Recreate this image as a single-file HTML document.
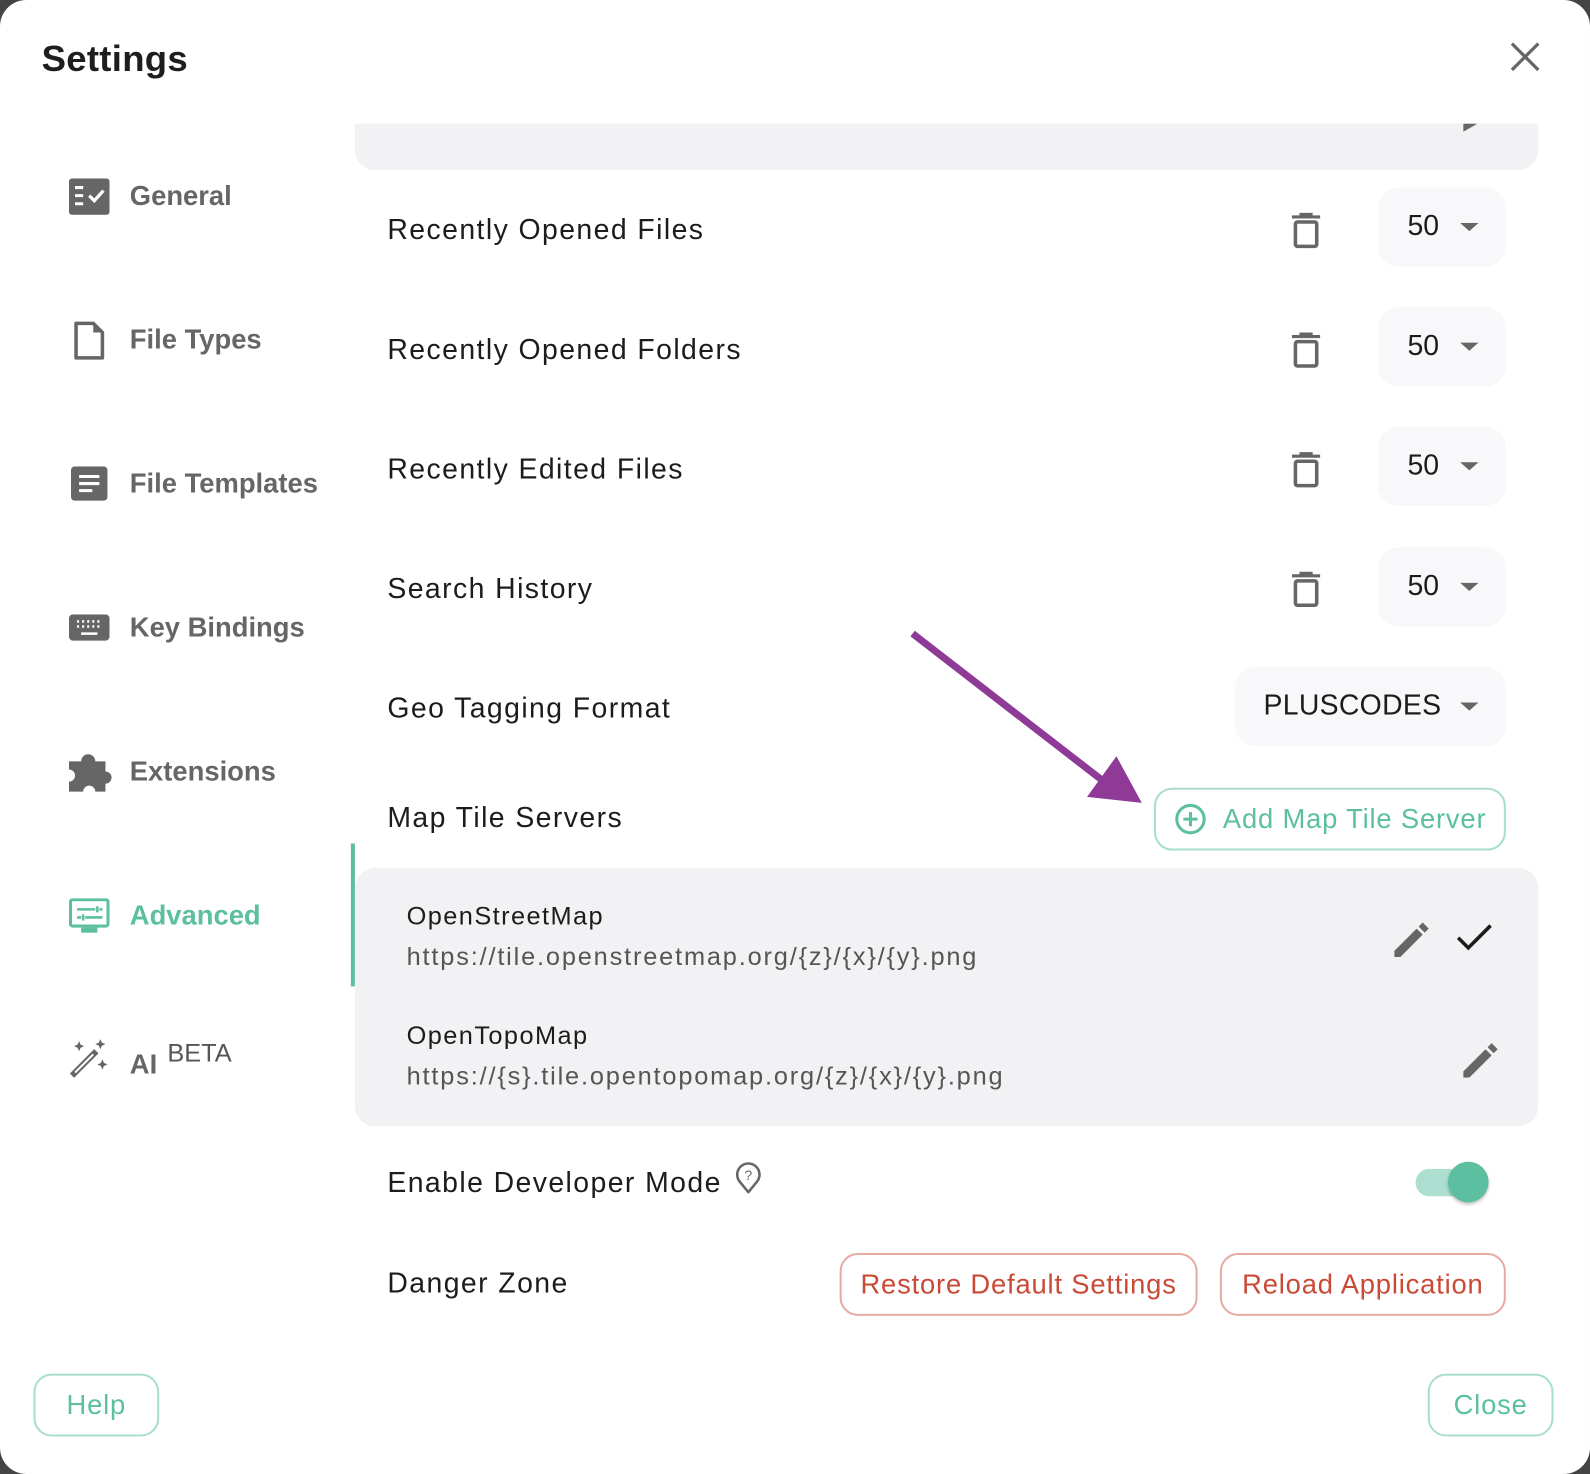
<!DOCTYPE html>
<html><head><meta charset="utf-8"><style>
html,body{margin:0;padding:0;width:1590px;height:1474px;overflow:hidden;background:#444;}
#s{position:absolute;left:0;top:0;width:1568px;height:1454px;transform:scale(1.01403,1.01376);transform-origin:0 0;}
#w{position:absolute;left:0;top:0;width:1568px;height:1454px;background:#fff;border-radius:26px;}
.a{position:absolute;font-family:"Liberation Sans",sans-serif;white-space:nowrap;line-height:1;}
.nav{font-size:27px;font-weight:bold;color:#666;}
.row{font-size:28px;color:#1c1c1c;letter-spacing:1.4px;}
.sel{position:absolute;background:#f8f7fa;border-radius:20px;}
.caret{position:absolute;width:0;height:0;border-left:9px solid transparent;border-right:9px solid transparent;border-top:8px solid #666;}
.btn{position:absolute;border-radius:18px;box-sizing:border-box;font-family:"Liberation Sans",sans-serif;display:flex;align-items:center;justify-content:center;font-size:27px;letter-spacing:0.8px;}
</style></head><body><div id="s"><div id="w">
<div class="a" style="left:41px;top:40px;font-size:36px;font-weight:bold;color:#1e1e1e;letter-spacing:0.3px">Settings</div>
<svg class="a" style="left:1489px;top:41px" width="30" height="30" viewBox="0 0 30 30"><path d="M2 2L28 28M28 2L2 28" stroke="#666" stroke-width="3.2"/></svg>

<svg class="a" style="left:68px;top:176px" width="40" height="36" viewBox="0 0 40 36"><rect width="40" height="36" rx="3" fill="#666"/><path d="M6 9h8M6 17h8M6 25h8" stroke="#fff" stroke-width="3"/><path d="M20 17l5 5 9-10" stroke="#fff" stroke-width="3.2" fill="none"/></svg>
<div class="a nav" style="left:128px;top:180px">General</div>
<svg class="a" style="left:72px;top:316px" width="32" height="40" viewBox="0 0 32 40"><path d="M3 3h17l9 9v25H3z" fill="none" stroke="#666" stroke-width="3.5" stroke-linejoin="round"/><path d="M20 3v9h9" fill="#666"/></svg>
<div class="a nav" style="left:128px;top:322px">File Types</div>
<svg class="a" style="left:70px;top:460px" width="36" height="34" viewBox="0 0 36 34"><rect width="36" height="34" rx="4" fill="#666"/><path d="M8 10h20M8 17h20M8 24h13" stroke="#fff" stroke-width="3"/></svg>
<div class="a nav" style="left:128px;top:464px">File Templates</div>
<svg class="a" style="left:68px;top:606px" width="40" height="26" viewBox="0 0 40 26"><rect width="40" height="26" rx="4" fill="#666"/><path d="M8 7h2M13 7h2M18 7h2M23 7h2M28 7h2M8 12h2M13 12h2M18 12h2M23 12h2M28 12h2M12 19h16" stroke="#fff" stroke-width="2.5"/></svg>
<div class="a nav" style="left:128px;top:606px">Key Bindings</div>
<svg class="a" style="left:68px;top:741px" width="42" height="40" viewBox="0 0 42 40"><path d="M0 10h12a7 7 0 0 1 14 0h10v10a6 6 0 0 1 0 12v8H26a6 6 0 0 0-12 0H0V30a6 6 0 0 0 0-12z" fill="#666"/></svg>
<div class="a nav" style="left:128px;top:748px">Extensions</div>
<svg class="a" style="left:68px;top:886px" width="40" height="36" viewBox="0 0 40 36"><rect x="1.5" y="1.5" width="37" height="26" rx="2" fill="none" stroke="#5bbfa0" stroke-width="3"/><rect x="12" y="29" width="16" height="5" fill="#5bbfa0"/><path d="M8 11h18M30 11h3M8 19h4M16 19h17M28 8v6M14 16v6" stroke="#5bbfa0" stroke-width="2.5"/></svg>
<div class="a nav" style="left:128px;top:890px;color:#5bbfa0">Advanced</div>
<div class="a" style="left:346px;top:832px;width:4px;height:141px;background:#5bbfa0"></div>
<svg class="a" style="left:67px;top:1023px" width="42" height="42" viewBox="0 0 42 42"><path d="M4 38L28 14" stroke="#666" stroke-width="6"/><path d="M7 35L25 17" stroke="#fff" stroke-width="2"/><path d="M11 4l1.5 3.5L16 9l-3.5 1.5L11 14l-1.5-3.5L6 9l3.5-1.5zM32 2l1.5 3.5L37 7l-3.5 1.5L32 12l-1.5-3.5L27 7l3.5-1.5zM34 22l1.5 3.5L39 27l-3.5 1.5L34 32l-1.5-3.5L29 27l3.5-1.5z" fill="#666"/></svg>
<div class="a nav" style="left:128px;top:1037px">AI</div>
<div class="a" style="left:165px;top:1027px;font-size:25px;color:#555">BETA</div>

<div class="a" style="left:350px;top:122px;width:1167px;height:46px;background:#f2f1f4;border-radius:0 0 20px 20px"></div>
<svg class="a" style="left:1443px;top:122px" width="16" height="8"><path d="M0 0h14L0 8z" fill="#666"/></svg>

<div class="a row" style="left:382px;top:213px">Recently Opened Files</div>
<div class="a row" style="left:382px;top:331px">Recently Opened Folders</div>
<div class="a row" style="left:382px;top:449px">Recently Edited Files</div>
<div class="a row" style="left:382px;top:567px">Search History</div>
<div class="a row" style="left:382px;top:685px">Geo Tagging Format</div>
<div class="a row" style="left:382px;top:793px">Map Tile Servers</div>

<svg class="a" style="left:1274px;top:210px" width="28" height="36" viewBox="0 0 28 36"><path d="M0 4h28M9 4V1h10v3" stroke="#666" stroke-width="3" fill="none"/><rect x="3.5" y="9" width="21" height="24" rx="2" fill="none" stroke="#666" stroke-width="3.5"/></svg>
<svg class="a" style="left:1274px;top:328px" width="28" height="36" viewBox="0 0 28 36"><path d="M0 4h28M9 4V1h10v3" stroke="#666" stroke-width="3" fill="none"/><rect x="3.5" y="9" width="21" height="24" rx="2" fill="none" stroke="#666" stroke-width="3.5"/></svg>
<svg class="a" style="left:1274px;top:446px" width="28" height="36" viewBox="0 0 28 36"><path d="M0 4h28M9 4V1h10v3" stroke="#666" stroke-width="3" fill="none"/><rect x="3.5" y="9" width="21" height="24" rx="2" fill="none" stroke="#666" stroke-width="3.5"/></svg>
<svg class="a" style="left:1274px;top:564px" width="28" height="36" viewBox="0 0 28 36"><path d="M0 4h28M9 4V1h10v3" stroke="#666" stroke-width="3" fill="none"/><rect x="3.5" y="9" width="21" height="24" rx="2" fill="none" stroke="#666" stroke-width="3.5"/></svg>

<div class="sel" style="left:1359px;top:185px;width:126px;height:78px"></div>
<div class="a row" style="left:1388px;top:209px;letter-spacing:0">50</div><div class="caret" style="left:1440px;top:220px"></div>
<div class="sel" style="left:1359px;top:303px;width:126px;height:78px"></div>
<div class="a row" style="left:1388px;top:327px;letter-spacing:0">50</div><div class="caret" style="left:1440px;top:338px"></div>
<div class="sel" style="left:1359px;top:421px;width:126px;height:78px"></div>
<div class="a row" style="left:1388px;top:445px;letter-spacing:0">50</div><div class="caret" style="left:1440px;top:456px"></div>
<div class="sel" style="left:1359px;top:540px;width:126px;height:78px"></div>
<div class="a row" style="left:1388px;top:564px;letter-spacing:0">50</div><div class="caret" style="left:1440px;top:575px"></div>
<div class="sel" style="left:1218px;top:658px;width:267px;height:78px"></div>
<div class="a row" style="left:1246px;top:682px;letter-spacing:0.3px">PLUSCODES</div><div class="caret" style="left:1440px;top:693px"></div>

<svg class="a" style="left:0;top:0" width="1568" height="1454"><path d="M900 625L1090 772" stroke="#8e3a96" stroke-width="7"/><path d="M1126 792L1072 786L1101 746z" fill="#8e3a96"/></svg>

<div class="btn" style="left:1138px;top:777px;width:347px;height:62px;border:2px solid #a8ded0;color:#5bbfa0;justify-content:flex-start;padding-left:18px">
<svg width="32" height="32" viewBox="0 0 32 32" style="margin-right:16px"><circle cx="16" cy="16" r="13.5" fill="none" stroke="#5bbfa0" stroke-width="3"/><path d="M16 9v14M9 16h14" stroke="#5bbfa0" stroke-width="3"/></svg>Add Map Tile Server</div>

<div class="a" style="left:350px;top:856px;width:1167px;height:255px;background:#f2f1f4;border-radius:20px"></div>
<div class="a" style="left:401px;top:892px;font-size:25px;color:#1c1c1c;letter-spacing:1.4px">OpenStreetMap</div>
<div class="a" style="left:401px;top:932px;font-size:25px;color:#555;letter-spacing:1.8px">https://tile.openstreetmap.org/{z}/{x}/{y}.png</div>
<div class="a" style="left:401px;top:1010px;font-size:25px;color:#1c1c1c;letter-spacing:1.4px">OpenTopoMap</div>
<div class="a" style="left:401px;top:1050px;font-size:25px;color:#555;letter-spacing:1.8px">https://{s}.tile.opentopomap.org/{z}/{x}/{y}.png</div>
<svg class="a" style="left:1375px;top:908px" width="36" height="36" viewBox="0 0 36 36"><path d="M0 30L22 8l6 6L6 36H0z M24 6l4-4 6 6-4 4z" fill="#666"/></svg>
<svg class="a" style="left:1436px;top:911px" width="36" height="28" viewBox="0 0 36 28"><path d="M2 14l10 10L34 2" stroke="#1c1c1c" stroke-width="3.5" fill="none"/></svg>
<svg class="a" style="left:1443px;top:1027px" width="36" height="36" viewBox="0 0 36 36"><path d="M0 30L22 8l6 6L6 36H0z M24 6l4-4 6 6-4 4z" fill="#666"/></svg>

<div class="a row" style="left:382px;top:1153px">Enable Developer Mode</div>
<svg class="a" style="left:725px;top:1144px" width="26" height="34" viewBox="0 0 26 34"><path d="M13 32L4 21A11 11 0 1 1 22 21z" fill="none" stroke="#666" stroke-width="2.5" stroke-linejoin="round"/><text x="13" y="20" font-size="14" text-anchor="middle" fill="#666" font-family="Liberation Sans">?</text></svg>
<div class="a" style="left:1396px;top:1153px;width:66px;height:27px;border-radius:14px;background:#acdfd0"></div>
<div class="a" style="left:1428px;top:1146px;width:40px;height:40px;border-radius:50%;background:#5bbfa0;box-shadow:0 2px 3px rgba(0,0,0,.25)"></div>

<div class="a row" style="left:382px;top:1252px">Danger Zone</div>
<div class="btn" style="left:828px;top:1236px;width:353px;height:62px;border:2px solid #e5aba1;color:#c94a36">Restore Default Settings</div>
<div class="btn" style="left:1203px;top:1236px;width:282px;height:62px;border:2px solid #e5aba1;color:#c94a36">Reload Application</div>

<div class="btn" style="left:33px;top:1355px;width:124px;height:62px;border:2px solid #a8ded0;color:#5bbfa0">Help</div>
<div class="btn" style="left:1408px;top:1355px;width:124px;height:62px;border:2px solid #a8ded0;color:#5bbfa0">Close</div>
</div></div></body></html>
